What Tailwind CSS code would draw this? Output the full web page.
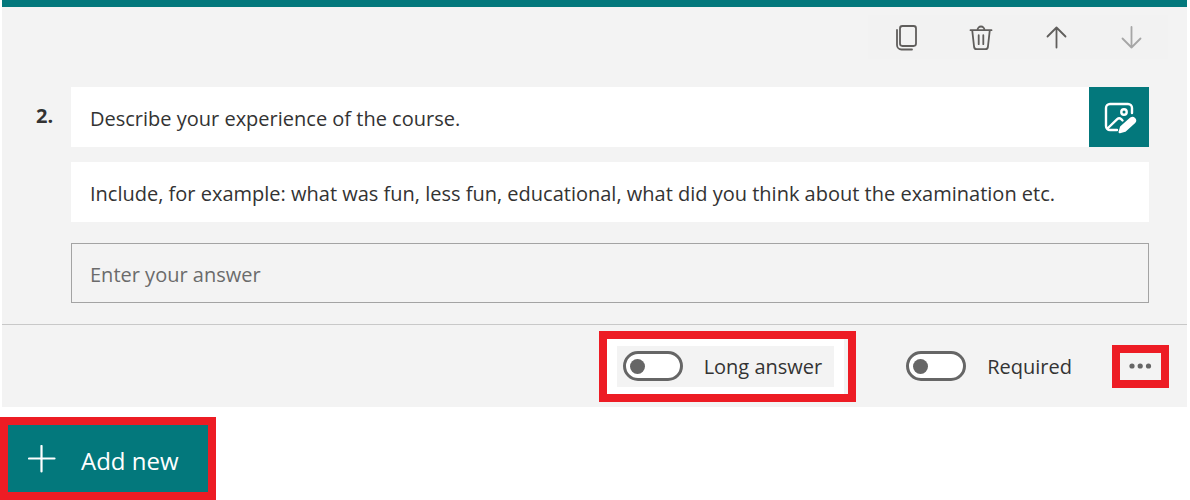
<!DOCTYPE html>
<html lang="en">
<head>
  <meta charset="UTF-8" />
  <meta name="viewport" content="width=device-width, initial-scale=1.0"/>
  <title>Course evaluation form</title>
  <script src="https://cdn.jsdelivr.net/npm/@tailwindcss/browser@4"></script>
</head>
<body class="bg-white text-[#333333] text-[20px] leading-7 font-['Open_Sans','Noto_Sans',sans-serif]">
  <!-- Question card -->
  <section class="ml-0.5 mr-[3px] border-t-[7px] border-[#03787c] bg-[#f3f3f3]">
    <!-- Toolbar -->
    <div class="flex justify-end pt-2 pr-[19px]">
      <div class="flex bg-[#f2f2f2] text-[#605e5c]">
        <button type="button" aria-label="Copy question" class="flex w-[75px] h-11 items-center justify-center">
          <svg class="size-7" viewBox="0 0 28 28" fill="none" stroke="currentColor" stroke-width="1.8" stroke-linecap="round">
            <rect x="8" y="3" width="16" height="20" rx="2.4"/>
            <path d="M5 7V22a4.500 4.500 0 0 0 4.500 4.500H20"/>
          </svg>
        </button>
        <button type="button" aria-label="Delete question" class="flex w-[75px] h-11 items-center justify-center">
          <svg class="size-7" viewBox="0 0 28 28" fill="none" stroke="currentColor" stroke-width="1.8" stroke-linecap="round" stroke-linejoin="round">
            <path d="M3.500 7.200H24.500M10.500 7a3.500 3.500 0 0 1 7 0M5.200 7.200L7.100 24a2.600 2.600 0 0 0 2.500 2.200h8.800a2.600 2.600 0 0 0 2.500-2.200L22.800 7.200M11.700 12.200V21.200M16.300 12.200V21.200"/>
          </svg>
        </button>
        <button type="button" aria-label="Move question up" class="flex w-[75px] h-11 items-center justify-center">
          <svg class="size-7" viewBox="0 0 28 28" fill="none" stroke="currentColor" stroke-width="1.8" stroke-linecap="round" stroke-linejoin="round">
            <path d="M14.500 24.500V4.500M5.500 13.500L14.500 4.500L23.500 13.500"/>
          </svg>
        </button>
        <button type="button" aria-label="Move question down" disabled class="flex w-[75px] h-11 items-center justify-center text-[#a6a6a6]">
          <svg class="size-7" viewBox="0 0 28 28" fill="none" stroke="currentColor" stroke-width="1.8" stroke-linecap="round" stroke-linejoin="round">
            <path d="M14.500 4V24.500M5.500 15.500L14.500 24.500L23.500 15.500"/>
          </svg>
        </button>
      </div>
    </div>

    <!-- Question fields -->
    <div class="flex pt-7 pr-[38px] pb-[21px]">
      <label for="question" class="w-[69px] shrink-0 pl-[34px] pt-[15px] font-bold">2.</label>
      <div class="flex-1">
        <div class="flex h-[60px]">
          <input id="question" type="text" value="Describe your experience of the course." class="flex-1 min-w-0 bg-white px-[19px] pt-[3px] outline-none">
          <button type="button" aria-label="Insert media" class="flex w-[60px] items-center justify-center bg-[#03787c] text-white">
            <svg class="size-9" viewBox="0 0 36 36" fill="none" stroke="currentColor" stroke-width="2.4" stroke-linecap="round" stroke-linejoin="round">
              <path d="M31 14V9a4 4 0 0 0-4-4H9a4 4 0 0 0-4 4v18a4 4 0 0 0 4 4h7M6.500 29.500L16.200 20.200a3 3 0 0 1 4 0L21.500 21.500"/>
              <circle cx="23" cy="13" r="2.7"/>
              <path d="M18.700 33L20.200 28.100L30 19.500a2.500 2.500 0 0 1 3.400 3.600L24 31.500Z" fill="currentColor"/>
            </svg>
          </button>
        </div>
        <input type="text" aria-label="Subtitle" value="Include, for example: what was fun, less fun, educational, what did you think about the examination etc." class="mt-[15px] block h-[60px] w-full bg-white px-[19px] pt-[3px] outline-none">
        <input type="text" aria-label="Answer" placeholder="Enter your answer" class="mt-[21px] block h-[60px] w-full border border-[#a3a3a3] px-[18px] pt-[3px] outline-none placeholder:text-[#6b6b6b]">
      </div>
    </div>

    <!-- Question options -->
    <div class="flex h-[83px] items-center justify-end border-t border-[#c8c8c8] pr-[18px]">
      <div class="border-8 border-[#ed1c24] pr-1">
        <div class="bg-white px-2.5 py-[7px]">
          <label class="flex h-[41px] items-center gap-[21px] bg-[#f3f3f3] pl-1.5 pr-3">
            <input type="checkbox" role="switch" class="flex h-[30px] w-[60px] shrink-0 appearance-none items-center rounded-full border-3 border-[#666666] bg-white pl-1 before:size-[15px] before:rounded-full before:bg-[#666666] checked:justify-end checked:pr-1">
            <span class="pt-0.5">Long answer</span>
          </label>
        </div>
      </div>
      <label class="ml-[50px] flex items-center gap-[21px]">
        <input type="checkbox" role="switch" class="flex h-[30px] w-[60px] shrink-0 appearance-none items-center rounded-full border-3 border-[#666666] bg-white pl-1 before:size-[15px] before:rounded-full before:bg-[#666666] checked:justify-end checked:pr-1">
        <span class="pt-0.5">Required</span>
      </label>
      <button type="button" aria-label="More settings" class="ml-10 flex h-[43px] w-[57px] items-center justify-center border-8 border-[#ed1c24] text-[#666666]">
        <svg class="h-2 w-6" viewBox="0 0 24 8" fill="currentColor">
          <circle cx="3" cy="4" r="2.6"/>
          <circle cx="11.2" cy="4" r="2.6"/>
          <circle cx="19.5" cy="4" r="2.6"/>
        </svg>
      </button>
    </div>
  </section>

  <!-- Add question -->
  <button type="button" class="mt-[10px] flex h-[83px] w-[216px] items-center gap-[25px] border-8 border-[#ed1c24] bg-[#03787c] pl-5 text-[24px] text-white">
    <svg class="size-7" viewBox="0 0 28 28" fill="none" stroke="currentColor" stroke-width="2.2" stroke-linecap="round">
      <path d="M13.500 1V26.500M1 13.500H26.500"/>
    </svg>
    <span class="pt-1">Add new</span>
  </button>
</body>
</html>
